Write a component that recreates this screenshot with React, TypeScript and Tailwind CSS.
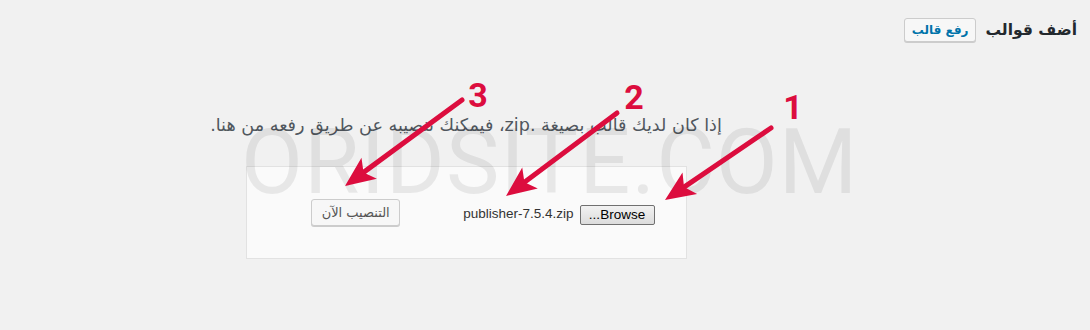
const RED = "#dc0d3e";

type ArrowProps = { x1: number; y1: number; x2: number; y2: number };

function Arrow({ x1, y1, x2, y2 }: ArrowProps) {
	const dx = x2 - x1;
	const dy = y2 - y1;
	const len = Math.hypot(dx, dy);
	const ux = dx / len;
	const uy = dy / len;
	const nx = -uy;
	const ny = ux;
	const headLen = 30;
	const half = 13;
	const bx = x2 - ux * headLen;
	const by = y2 - uy * headLen;
	const notchX = x2 - ux * (headLen - 7);
	const notchY = y2 - uy * (headLen - 7);
	const pts = [
		[x2, y2],
		[bx + nx * half, by + ny * half],
		[notchX, notchY],
		[bx - nx * half, by - ny * half],
	]
		.map((p) => p.join(","))
		.join(" ");
	return (
		<g>
			<line x1={x1} y1={y1} x2={notchX} y2={notchY} stroke={RED} strokeWidth={5} strokeLinecap="round" />
			<polygon points={pts} fill={RED} />
		</g>
	);
}

export default function App() {
	return (
		<div dir="rtl" className="relative h-[330px] w-full overflow-hidden bg-[#f1f1f1] font-['DejaVu_Sans',sans-serif]">
			{/* header */}
			<div className="flex items-center gap-[9px] pr-[13px] pt-[18px]">
				<h1 className="text-[15.5px] font-bold leading-[24px] text-[#23282d]">أضف قوالب</h1>
				<button className="h-[24px] rounded-[3px] border border-[#cccccc] bg-[#f7f7f7] px-[7px] text-[12px] font-bold leading-[22px] text-[#0073aa] shadow-[0_1px_0_#cccccc]">
					رفع قالب
				</button>
			</div>

			{/* upload area */}
			<div className="pr-[158px]">
				<p className="mt-[72px] text-center text-[17.6px] leading-[22px] text-[#50575e]">
					إذا كان لديك قالب بصيغة .zip، فيمكنك تنصيبه عن طريق رفعه من هنا.
				</p>
				<div className="mx-auto mt-[30px] flex h-[93px] w-[441px] items-center gap-[63px] border border-[#e2e2e2] bg-[#fafafa] pr-[31px]">
					<div className="flex items-center gap-[6px] pt-[4px] font-['Liberation_Sans',sans-serif]">
						<button
							dir="rtl"
							className="h-[20px] w-[75px] rounded-[2px] border border-[#707070] bg-gradient-to-b from-[#f2f2f2] to-[#dcdcdc] text-[13.5px] leading-[18px] text-black"
						>
							Browse...
						</button>
						<span dir="ltr" className="text-[13.5px] text-[#333333]">
							publisher-7.5.4.zip
						</span>
					</div>
					<button className="h-[27px] w-[89px] rounded-[3px] border border-[#cccccc] bg-[#f7f7f7] text-[13px] leading-[25px] text-[#555555] shadow-[0_1px_0_#cccccc]">
						التنصيب الآن
					</button>
				</div>
			</div>

			{/* watermark */}
			<div
				dir="ltr"
				className="pointer-events-none absolute left-[241px] top-[118px] font-['Roboto',sans-serif] text-[90px] font-normal leading-none tracking-[1px] text-[rgba(0,0,0,0.075)]"
			>
				ORIDSITE.COM
			</div>

			{/* annotations */}
			<svg className="pointer-events-none absolute left-0 top-0" width={1090} height={330} viewBox="0 0 1090 330">
				<Arrow x1={771} y1={128} x2={665} y2={200} />
				<Arrow x1={617} y1={113} x2={506} y2={196} />
				<Arrow x1={462} y1={100} x2={345} y2={186} />
				<g fill={RED} fontFamily="Roboto, sans-serif" fontWeight={700} fontSize={34}>
					<text x={793} y={119} textAnchor="middle">1</text>
					<text x={634} y={109} textAnchor="middle">2</text>
					<text x={478} y={107} textAnchor="middle">3</text>
				</g>
			</svg>
		</div>
	);
}
